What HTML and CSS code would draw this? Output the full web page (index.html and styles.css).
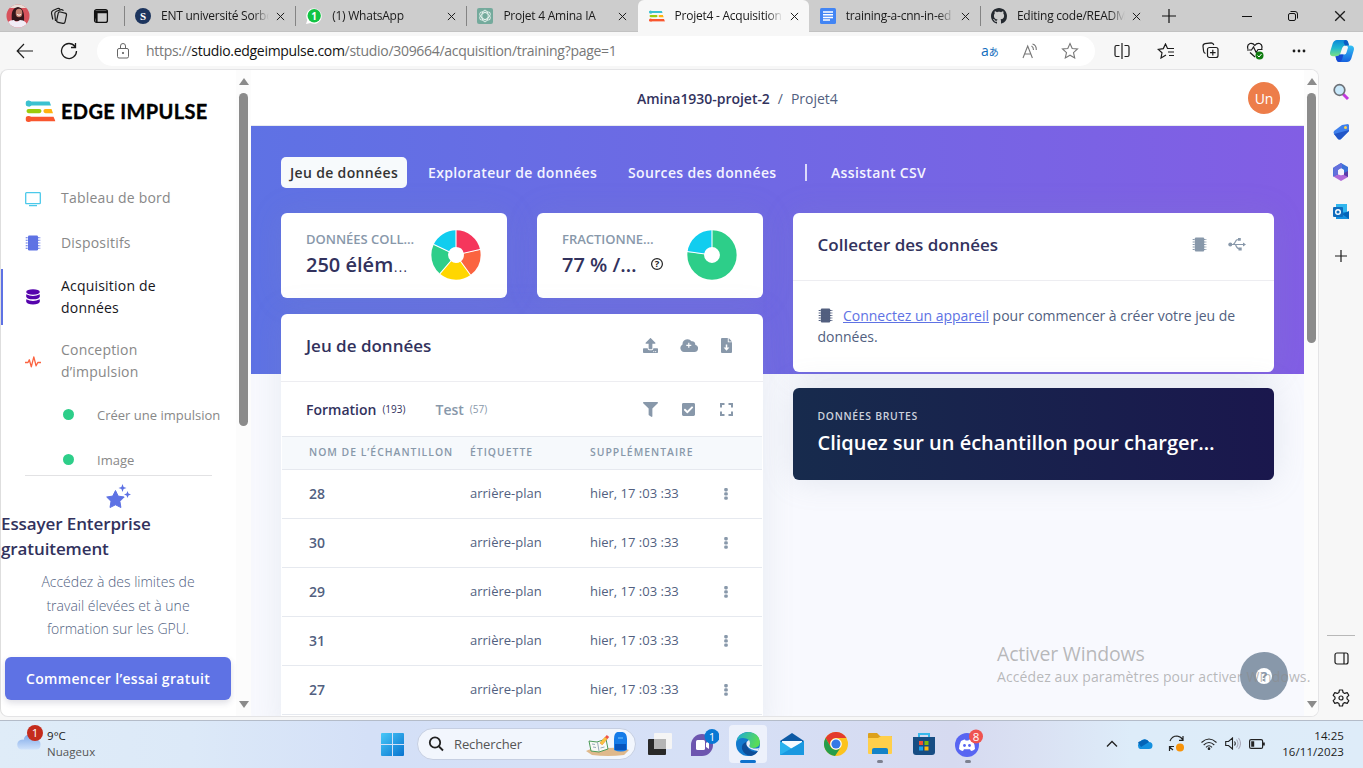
FILE: index.html
```html
<!DOCTYPE html>
<html lang="fr">
<head>
<meta charset="utf-8">
<title>Projet4 - Acquisition de données</title>
<link rel="stylesheet" href="styles.css">
</head>
<body>
<svg class="defs" width="0" height="0">
  <symbol id="close" viewBox="0 0 10 10"><path d="M1 1l8 8M9 1L1 9" stroke="#1b1b1b" stroke-width="1.1"/></symbol>
  <symbol id="edge-impulse" viewBox="0 0 30 22">
    <path d="M3 1.500h21l1.500 4H6Q4 7 2.500 6A3 3 0 0 1 3 .500Z" fill="#3bc1d0"/><circle cx="3" cy="3.500" r="3" fill="#3bc1d0"/>
    <rect x="1" y="9" width="15" height="4.200" rx="2.100" fill="#9ccb0b"/><path d="M20 9h6l1.500 4.200H20a2.100 2.100 0 0 1 0-4.200z" fill="#ffb30f"/>
    <path d="M3 16.800h25l2 4.400H3z" fill="#f9562e"/><circle cx="3" cy="18.900" r="3" fill="#f9562e"/>
  </symbol>
  <symbol id="chip" viewBox="0 0 16 16"><rect x="3" y=".500" width="10" height="15" rx="1.200" fill="currentColor"/><path d="M.700 2.700h14.600M.700 5.300h14.600M.700 8h14.600M.700 10.700h14.600M.700 13.300h14.600" stroke="currentColor" stroke-width="1.100" stroke-dasharray="1.700 .300"/></symbol>
  <symbol id="dots" viewBox="0 0 4 12"><rect x=".200" y="0" width="3.600" height="3.400" rx="1.300" fill="#8898aa"/><rect x=".200" y="4.200" width="3.600" height="3.400" rx="1.300" fill="#8898aa"/><rect x=".200" y="8.400" width="3.600" height="3.400" rx="1.300" fill="#8898aa"/></symbol>
</svg>

<div class="screen">
  <header class="tabbar">
    <div class="tab-tools">
      <svg width="24" height="24" viewBox="0 0 24 24"><defs><clipPath id="av"><circle cx="12" cy="12" r="11.500"/></clipPath></defs><g clip-path="url(#av)"><rect width="24" height="24" fill="#d8525c"/><rect y="0" width="24" height="4" fill="#e9ddd6"/><path d="M6 17Q4 4 12 3q7 1 6 14z" fill="#32151a"/><ellipse cx="13" cy="9" rx="3.300" ry="4.200" fill="#c48372"/><path d="M0 24q0-8 8-8 2 3 6 0 7 0 8 8z" fill="#f1edf7"/><path d="M11 10.500q2 1.500 4 0" stroke="#fff" fill="none"/></g></svg>
      <svg width="18" height="18" viewBox="0 0 18 18" fill="none" stroke="#1c1c1c" stroke-width="1.200"><rect x="7.500" y="5.500" width="8.500" height="10.500" rx="1.800" transform="rotate(12 12 10)"/><path d="M5.500 14L4.800 6.800Q4.700 4.800 6.500 4.200L11 2.700Q12.800 2.300 13.400 3.800M2.800 12.500L1.500 6.500Q1.200 4.400 3 3.500L7.500 1.500Q9 1 10 2.200"/></svg>
      <svg width="16" height="16" viewBox="0 0 16 16"><rect x="1.600" y="1.600" width="12.800" height="12.800" rx="2" fill="none" stroke="#111" stroke-width="1.300"/><path d="M1.500 2.500h13v2.700h-13zM1 5h3.600v9.500H3z" fill="#111"/></svg>
    </div>
    <div class="tab">
      <svg width="16" height="16" viewBox="0 0 16 16"><circle cx="8" cy="8" r="8" fill="#1d355e"/><text x="8" y="12" class="fav-serif">S</text></svg>
      <span class="tab-title">ENT université Sorbo</span><svg class="x"><use href="#close"/></svg>
    </div>
    <div class="tab">
      <svg width="16" height="16" viewBox="0 0 16 16"><path d="M0 16L1.300 12A7.700 7.700 0 1 1 4.500 15z" fill="#fff"/><circle cx="8.200" cy="7.800" r="6.700" fill="#12c343"/><text x="8" y="11.500" class="fav-num">1</text></svg>
      <span class="tab-title">(1) WhatsApp</span><svg class="x"><use href="#close"/></svg>
    </div>
    <div class="tab">
      <svg width="16" height="16" viewBox="0 0 16 16"><rect width="16" height="16" rx="2" fill="#74aa9c"/><g fill="none" stroke="#e8f3ef" stroke-width=".900"><ellipse cx="8" cy="8" rx="3.200" ry="5.800"/><ellipse cx="8" cy="8" rx="3.200" ry="5.800" transform="rotate(60 8 8)"/><ellipse cx="8" cy="8" rx="3.200" ry="5.800" transform="rotate(120 8 8)"/></g></svg>
      <span class="tab-title">Projet 4 Amina IA</span><svg class="x"><use href="#close"/></svg>
    </div>
    <div class="tab active">
      <svg width="16" height="16" viewBox="0 0 30 30"><g transform="translate(0 4)"><use href="#edge-impulse" width="30" height="22"/></g></svg>
      <span class="tab-title">Projet4 - Acquisition</span><svg class="x"><use href="#close"/></svg>
    </div>
    <div class="tab">
      <svg width="16" height="16" viewBox="0 0 16 16"><rect width="16" height="16" rx="1.500" fill="#4285f4"/><path d="M3 4h10M3 6.700h10M3 9.400h10M3 12.100h7" stroke="#fff" stroke-width="1.500"/></svg>
      <span class="tab-title">training-a-cnn-in-ed</span><svg class="x"><use href="#close"/></svg>
    </div>
    <div class="tab">
      <svg width="16" height="16" viewBox="0 0 16 16"><path fill="#24292f" d="M8 0C3.580 0 0 3.580 0 8c0 3.540 2.290 6.530 5.470 7.590.4.070.55-.17.55-.38 0-.19-.01-.82-.01-1.490-2.010.37-2.530-.49-2.690-.94-.09-.23-.48-.94-.82-1.130-.28-.15-.68-.52-.01-.53.63-.01 1.080.58 1.230.82.72 1.210 1.870.87 2.330.66.070-.52.280-.87.510-1.070-1.780-.2-3.640-.89-3.640-3.950 0-.87.310-1.590.820-2.150-.08-.2-.36-1.020.08-2.120 0 0 .67-.21 2.200.820.640-.18 1.320-.27 2-.27s1.360.09 2 .27c1.530-1.040 2.200-.82 2.200-.82.440 1.100.160 1.920.080 2.120.510.560.820 1.270.820 2.150 0 3.070-1.870 3.750-3.650 3.950.290.250.540.730.540 1.480 0 1.070-.01 1.930-.01 2.200 0 .21.150.46.550.38A8 8 0 0 0 16 8c0-4.420-3.580-8-8-8z"/></svg>
      <span class="tab-title">Editing code/README</span><svg class="x"><use href="#close"/></svg>
    </div>
    <div class="newtab"><svg width="14" height="14"><path d="M7 0v14M0 7h14" stroke="#111" stroke-width="1.200"/></svg></div>
    <div class="winctl">
      <svg width="10" height="10"><path d="M0 5.500h10" stroke="#111"/></svg>
      <svg width="10" height="10" viewBox="0 0 10 10" fill="none" stroke="#111"><rect x=".500" y="2.500" width="7" height="7" rx="1.500"/><path d="M2.500.500H7A2.500 2.500 0 0 1 9.500 3v4.500"/></svg>
      <svg width="12" height="12" viewBox="0 0 10 10"><use href="#close"/></svg>
    </div>
  </header>

  <div class="toolbar">
    <svg width="18" height="16" viewBox="0 0 18 16" fill="none" stroke="#1c1c1c" stroke-width="1.200"><path d="M17 8H1.500M8 1L1.200 8 8 15"/></svg>
    <svg class="reload" width="18" height="18" viewBox="0 0 18 18" fill="none" stroke="#1c1c1c" stroke-width="1.300"><path d="M15 4.500A7.500 7.500 0 1 0 16.500 9M15.500 1v4.500H11"/></svg>
    <div class="address">
      <svg width="14" height="16" viewBox="0 0 14 16" fill="none" stroke="#666"><rect x="1.500" y="5.500" width="11" height="9.500" rx="1.500"/><path d="M4.500 5V3a2.500 2.500 0 0 1 5 0v2"/><circle cx="7" cy="10" r=".700" fill="#666"/></svg>
      <span class="url">https://<b>studio.edgeimpulse.com</b>/studio/309664/acquisition/training?page=1</span>
      <span class="translate">a<small>あ</small></span>
      <svg width="17" height="16" viewBox="0 0 17 16" fill="none" stroke="#777" stroke-width="1.100"><path d="M1 15L5.700 3l4.700 12M2.600 11h6.200M9.500 3q2 1 2 4M10.500 1q4 1 3.800 6"/></svg>
      <svg class="fav" width="18" height="18" viewBox="0 0 18 18" fill="none" stroke="#777" stroke-width="1.100"><path d="M9 1.500l2.200 5 5.300.500-4 3.600 1.200 5.400L9 13.200 4.300 16l1.200-5.400-4-3.600 5.300-.500z"/></svg>
    </div>
    <div class="tools">
      <svg width="16" height="16" viewBox="0 0 16 16" fill="none" stroke="#1c1c1c" stroke-width="1.200"><path d="M5.500 2.500H2.500a1.500 1.500 0 0 0-1.500 1.500v8a1.500 1.500 0 0 0 1.500 1.500h3M10.500 2.500h3A1.500 1.500 0 0 1 15 4v8a1.500 1.500 0 0 1-1.500 1.500h-3M8 0v16"/></svg>
      <svg width="18" height="16" viewBox="0 0 18 16" fill="none" stroke="#1c1c1c" stroke-width="1.200"><path d="M9 12L4 15l1-5.200-3.700-3.400 5-.800L8.500 1l2 4.500H17M11 9h6M12 12.500h5"/></svg>
      <svg width="17" height="17" viewBox="0 0 17 17" fill="none" stroke="#1c1c1c" stroke-width="1.200"><rect x="5.500" y="5.500" width="10.500" height="10" rx="2"/><path d="M10.800 7.800v5.600M8 10.600h5.600M3.500 11.500Q1.800 11 1.600 9.300L1 4.200Q.900 2 3 1.600l6.300-.8q2 0 2.500 2.200"/></svg>
      <svg width="19" height="18" viewBox="0 0 19 18" fill="none" stroke="#1c1c1c" stroke-width="1.200"><path d="M2 7Q.500 3 4 1.500 7 .800 8.800 3.500 10.700.800 13.700 1.500 17 3 15.600 7M1 8h4.500l2-3 2.700 5.500L12 7.500h4.500M4 10.500l5 4.500"/><circle cx="13.500" cy="13.500" r="4" fill="#107c10" stroke="none"/><path d="M11.500 13.500l1.500 1.500 2.500-3" stroke="#fff" stroke-width="1"/></svg>
      <svg width="14" height="4"><g fill="#1c1c1c"><circle cx="2" cy="2" r="1.400"/><circle cx="7" cy="2" r="1.400"/><circle cx="12" cy="2" r="1.400"/></g></svg>
    </div>
    <svg class="copilot" width="24" height="22" viewBox="0 0 24 22"><defs><linearGradient id="cp1" x2="0" y2="1"><stop stop-color="#0b87d8"/><stop offset=".5" stop-color="#20b8d0"/><stop offset="1" stop-color="#7be082"/></linearGradient><linearGradient id="cp2" x2="0" y2="1"><stop stop-color="#34c3f4"/><stop offset="1" stop-color="#1562df"/></linearGradient></defs><path d="M7 0h8.500q2 0 2.500 2l1 3.500h-3.500q-2.500 0-3.500 3l-2 6q-.7 1.700-3 1.700H3q-4 0-2.700-5L2.700 3.500Q4 0 7 0z" fill="url(#cp1)"/><path d="M17 5.500h3.500q4.500.5 3.200 5L21.300 18.500Q20 22 17 22H9q-2 0-2.700-2.500L5.500 16.200h2q2.300 0 3-1.700h4q1.500 0 2-2l1.500-5z" fill="url(#cp2)"/><path d="M9.500 14.500Q8.800 16.200 6.500 16.200h-1l.8 3Q7 22 9 22q2.300 0 3-2.500l1.500-5z" fill="#174ad2"/><path d="M15 0q2.500 0 3 2l1 3.500h-4L13.500 2z" fill="#0a5cc4"/></svg>
  </div>

  <div class="workspace">
    <div class="page">
      <aside class="side">
        <div class="logo"><svg width="31" height="22" viewBox="0 0 30 22"><use href="#edge-impulse"/></svg><span>EDGE IMPULSE</span></div>
        <nav class="menu">
          <a><svg class="low" width="16" height="15" viewBox="0 0 16 15"><rect x=".700" y=".700" width="14.600" height="11" rx=".800" fill="none" stroke="#4bc9ea" stroke-width="1.300"/><path d="M4 13.700h8" stroke="#4bc9ea" stroke-width="1.200"/></svg><span>Tableau de bord</span></a>
          <a><svg class="indigo" width="16" height="16"><use href="#chip"/></svg><span>Dispositifs</span></a>
          <a class="tall current"><svg width="16" height="16" viewBox="0 0 16 16"><g fill="#5603ad"><ellipse cx="8" cy="3" rx="6.800" ry="2.700"/><path d="M1.200 5.200q6.800 3.500 13.600 0v2.500q-1 2.600-6.800 2.600t-6.800-2.600zM1.200 10.300q6.800 3.500 13.600 0v2.500q-1 2.600-6.800 2.600t-6.800-2.600z"/></g></svg><span>Acquisition de données</span></a>
          <a class="tall design"><svg class="low" width="16" height="12" viewBox="0 0 16 12"><path d="M0 6.500h3l1.300-2.700 2 7L8.800.800l2.300 9 1.700-3.300H16" fill="none" stroke="#fb6340" stroke-width="1.300" stroke-linejoin="round"/></svg><span>Conception d’impulsion</span></a>
          <a class="sub"><i></i><span>Créer une impulsion</span></a>
          <a class="sub last"><i></i><span>Image</span></a>
        </nav>
        <div class="promo">
          <svg width="26" height="25" viewBox="0 0 26 25" fill="#5e72e4"><path d="M10.500 6.500l2.700 5.600 6 .900-4.300 4.300 1 6.200-5.400-2.700L5 23.500l1-6.200L1.700 13l6-.900z" stroke="#5e72e4" stroke-linejoin="round"/><path d="M17.500 0l1.100 2.900 2.900 1.100-2.900 1.100-1.100 2.900-1.100-2.900L13.500 4l2.900-1.100zM22.500 7l1 2.500 2.500 1-2.500 1-1 2.500-1-2.500-2.500-1 2.500-1z"/></svg>
          <h3>Essayer Enterprise gratuitement</h3>
          <p>Accédez à des limites de travail élevées et à une formation sur les GPU.</p>
          <button>Commencer l’essai gratuit</button>
        </div>
      </aside>
      <div class="scroll"><i class="up"></i><i class="thumb side-thumb"></i><i class="down"></i></div>

      <main class="main">
        <div class="crumbs"><b>Amina1930-projet-2</b><span>/</span><span>Projet4</span><div class="user">Un</div></div>
        <div class="content">
          <nav class="tabs"><a class="on">Jeu de données</a><a>Explorateur de données</a><a>Sources des données</a><i></i><a>Assistant CSV</a></nav>
          <div class="cols">
            <div class="col">
              <div class="stats">
                <section class="card stat">
                  <div><h6>DONNÉES COLL…</h6><strong>250 élém<em>…</em></strong></div>
                  <svg class="pie" width="50" height="50" viewBox="0 0 50 50"><g transform="rotate(-90 25 25)" fill="none" stroke-width="16.700"><circle cx="25" cy="25" r="16.300" pathLength="100" stroke="#f5365c" stroke-dasharray="21.500 100"/><circle cx="25" cy="25" r="16.300" pathLength="100" stroke="#fb6340" stroke-dasharray="18.500 100" stroke-dashoffset="-21.500"/><circle cx="25" cy="25" r="16.300" pathLength="100" stroke="#ffd600" stroke-dasharray="21.300 100" stroke-dashoffset="-40"/><circle cx="25" cy="25" r="16.300" pathLength="100" stroke="#2dce89" stroke-dasharray="20.700 100" stroke-dashoffset="-61.300"/><circle cx="25" cy="25" r="16.300" pathLength="100" stroke="#11cdef" stroke-dasharray="18 100" stroke-dashoffset="-82"/></g><path d="M25 25V0M25 25L50 19.200M25 25L39.700 45.300M25 25L8.800 43.800M25 25L2.300 14.200" stroke="#fff" stroke-width="1.100"/></svg>
                </section>
                <section class="card stat">
                  <div><h6>FRACTIONNE…</h6><strong>77 % /…<svg class="help" width="12" height="12" viewBox="0 0 12 12"><circle cx="6" cy="6" r="5.400" fill="none" stroke="#222" stroke-width="1.200"/><text x="6" y="9.300">?</text></svg></strong></div>
                  <svg class="pie" width="50" height="50" viewBox="0 0 50 50"><g transform="rotate(-90 25 25)" fill="none" stroke-width="16.700"><circle cx="25" cy="25" r="16.300" pathLength="100" stroke="#2dce89" stroke-dasharray="77 100"/><circle cx="25" cy="25" r="16.300" pathLength="100" stroke="#11cdef" stroke-dasharray="23 100" stroke-dashoffset="-77"/></g><path d="M25 25V0M25 25L0 21.500" stroke="#fff" stroke-width="1.100"/></svg>
                </section>
              </div>
              <section class="card dataset">
                <div class="head"><h2>Jeu de données</h2>
                  <div class="acts">
                    <svg width="15" height="15" viewBox="0 0 512 512"><path fill="#8898aa" d="M296 384h-80c-13.300 0-24-10.700-24-24V192h-87.700c-17.800 0-26.700-21.500-14.100-34.100L242.300 5.700c7.500-7.500 19.800-7.500 27.300 0l152.200 152.200c12.600 12.600 3.700 34.100-14.100 34.100H320v168c0 13.300-10.700 24-24 24zm216-8v112c0 13.300-10.700 24-24 24H24c-13.300 0-24-10.700-24-24V376c0-13.300 10.700-24 24-24h136v8c0 30.900 25.100 56 56 56h80c30.900 0 56-25.100 56-56v-8h136c13.300 0 24 10.700 24 24zm-124 88c0-11-9-20-20-20s-20 9-20 20 9 20 20 20 20-9 20-20zm64 0c0-11-9-20-20-20s-20 9-20 20 9 20 20 20 20-9 20-20z"/></svg>
                    <svg width="18" height="13" viewBox="0 0 18 13"><path fill="#8898aa" d="M4 13a4 4 0 0 1-1.500-7.500A5 5 0 0 1 11.500 2.300 3 3 0 0 1 15.200 5.700 3.700 3.700 0 0 1 14.500 13z"/><path d="M8.800 3.800v5M6.300 6.300h5" stroke="#fff" stroke-width="1.200"/></svg>
                    <svg width="11" height="15" viewBox="0 0 11 15"><path fill="#8898aa" d="M1 0h5.800v4.300H11V14a1 1 0 0 1-1 1H1a1 1 0 0 1-1-1V1a1 1 0 0 1 1-1zM7.700 0L11 3.400H7.700z"/><path d="M5.500 6.500v4" stroke="#fff" stroke-width="1.500"/><path d="M2.600 9.500h5.800l-2.900 3.200z" fill="#fff"/></svg>
                  </div>
                </div>
                <div class="sets"><b>Formation</b><small>(193)</small><b class="dim">Test</b><small class="dim">(57)</small>
                  <div class="acts">
                    <svg width="15" height="15" viewBox="0 0 512 512"><path fill="#8898aa" d="M487.976 0H24.028C2.710 0-8.047 25.866 7.058 40.971L192 225.941V432c0 7.831 3.821 15.170 10.237 19.662l80 55.980C298.020 518.690 320 507.493 320 487.980V225.941l184.947-184.970C520.021 25.896 509.338 0 487.976 0z"/></svg>
                    <svg width="13" height="15" viewBox="0 0 448 512"><path fill="#8898aa" d="M400 480H48c-26.510 0-48-21.490-48-48V80c0-26.510 21.490-48 48-48h352c26.510 0 48 21.490 48 48v352c0 26.510-21.490 48-48 48zm-204.686-98.059l184-184c6.248-6.248 6.248-16.379 0-22.627l-22.627-22.627c-6.248-6.248-16.379-6.249-22.628 0L184 302.745l-70.059-70.059c-6.248-6.248-16.379-6.248-22.628 0l-22.627 22.627c-6.248 6.248-6.248 16.379 0 22.627l104 104c6.249 6.250 16.379 6.250 22.628.001z"/></svg>
                    <svg width="13" height="13" viewBox="0 0 13 13"><path d="M1 4.500V1h3.500M8.500 1H12v3.500M12 8.500V12H8.500M4.500 12H1V8.500" fill="none" stroke="#8898aa" stroke-width="2"/></svg>
                  </div>
                </div>
                <div class="row th"><span>NOM DE L’ÉCHANTILLON</span><span>ÉTIQUETTE</span><span>SUPPLÉMENTAIRE</span></div>
                <div class="row"><b>28</b><span>arrière-plan</span><span>hier, 17 :03 :33</span><svg><use href="#dots"/></svg></div>
                <div class="row"><b>30</b><span>arrière-plan</span><span>hier, 17 :03 :33</span><svg><use href="#dots"/></svg></div>
                <div class="row"><b>29</b><span>arrière-plan</span><span>hier, 17 :03 :33</span><svg><use href="#dots"/></svg></div>
                <div class="row"><b>31</b><span>arrière-plan</span><span>hier, 17 :03 :33</span><svg><use href="#dots"/></svg></div>
                <div class="row"><b>27</b><span>arrière-plan</span><span>hier, 17 :03 :33</span><svg><use href="#dots"/></svg></div>
              </section>
            </div>
            <div class="col">
              <section class="card collect">
                <div class="head"><h2>Collecter des données</h2>
                  <svg class="grey" width="15" height="15"><use href="#chip"/></svg>
                  <svg width="18" height="13" viewBox="0 0 18 13" fill="#8898aa"><circle cx="2.300" cy="6.500" r="2"/><path d="M15 4.400l3 2.100-3 2.100zM10 0h2.800v2.800H10zM10.500 9.500h3.200v3H10.500z"/><path d="M3 6.500h13M5 6.500Q6.500 6 7.500 3.500 8 1.500 10.500 1.500M7.500 6.500Q9 11 12 11" fill="none" stroke="#8898aa" stroke-width="1.200"/></svg>
                </div>
                <p><svg class="slate" width="15" height="15"><use href="#chip"/></svg><a>Connectez un appareil</a> pour commencer à créer votre jeu de données.</p>
              </section>
              <section class="raw"><h6>DONNÉES BRUTES</h6><h2>Cliquez sur un échantillon pour charger…</h2></section>
            </div>
          </div>
        </div>
        <div class="chat"><svg width="16" height="16" viewBox="0 0 16 16"><circle cx="8" cy="8" r="8" fill="#fff"/><text x="8" y="12.500">?</text></svg></div>
      </main>
      <div class="scroll"><i class="up"></i><i class="thumb main-thumb"></i><i class="down"></i></div>
    </div>

    <aside class="edgebar">
      <svg width="18" height="18" viewBox="0 0 18 18"><path d="M11 11l5 5" stroke="#c239e0" stroke-width="3"/><circle cx="7.500" cy="7" r="5.300" fill="#c9e9fb" stroke="#6d7177" stroke-width="1.700"/></svg>
      <svg width="18" height="18" viewBox="0 0 18 18"><path d="M10 2l6-1 1 1v6l-8 8q-1.500 1-3 0L2 11q-1-1.500 0-3z" fill="#3f80ec"/><path d="M2 11l15-4v1l-8 8q-1.500 1-3 0z" fill="#2256c7"/><circle cx="13.500" cy="4.500" r="1.500" fill="#ffd34e"/></svg>
      <svg width="18" height="18" viewBox="0 0 18 18"><path d="M9 0l7 4v5l-4 2V7L9 5 6 7v5l-4 2-1-1V5z" fill="#3c72d8"/><path d="M9 0L1.500 4.500v9L6 11V7l4-2V1z" fill="#6470dc"/><path d="M1.500 13.500L9 18l7-4V9l-5 3-5-.500z" fill="#b06ad8"/><path d="M16 14V8l-4 2v2z" fill="#5b3ca8"/><path d="M9 5.500l3 1.700v3.600l-3 1.700-3-1.700V7.200z" fill="#f4f4fa"/></svg>
      <svg width="18" height="18" viewBox="0 0 18 18"><path d="M4 1h11v15H4z" fill="#31b6ee"/><path d="M4 9h13v7H4z" fill="#1490df"/><path d="M10 11l7-3v8z" fill="#0364b8"/><rect x="1" y="4" width="10" height="10" rx="1" fill="#0f6cbd"/><circle cx="6" cy="9" r="2.300" fill="none" stroke="#fff" stroke-width="1.400"/></svg>
      <svg class="plus" width="12" height="12"><path d="M6 0v12M0 6h12" stroke="#1c1c1c" stroke-width="1.200"/></svg>
      <hr>
      <svg class="pane" width="15" height="13" viewBox="0 0 15 13" fill="none" stroke="#1c1c1c" stroke-width="1.200"><rect x="1" y="1" width="13" height="11" rx="2"/><path d="M10 1v11"/></svg>
      <svg class="gear" width="18" height="18" viewBox="0 0 18 18" fill="none" stroke="#1c1c1c" stroke-width="1.200"><circle cx="9" cy="9" r="2"/><path d="M7.500 1h3l.6 2.500 1.600.9 2.500-.8 1.600 2.700L15 8.200v1.600l1.800 1.900-1.600 2.700-2.500-.8-1.600.9-.6 2.500h-3l-.6-2.500-1.600-.9-2.500.8-1.600-2.700L3 9.800V8.200L1.200 6.300l1.600-2.700 2.500.8 1.600-.9z" stroke-linejoin="round"/></svg>
    </aside>
  </div>

  <footer class="taskbar">
    <div class="weather">
      <svg width="30" height="30" viewBox="0 0 30 30"><defs><linearGradient id="cl" x2="0" y2="1"><stop stop-color="#7ca7e8"/><stop offset="1" stop-color="#cfe2fb"/></linearGradient></defs><path d="M6 25.500a5 5 0 0 1-.5-9.500q2-1 3 0 1-5 6-6 6-.5 7 6 4 0 4 4.500 0 5-4 5z" fill="url(#cl)"/><circle cx="20" cy="9" r="8" fill="#c42b1c"/><text x="20" y="13">1</text></svg>
      <div><b>9°C</b><span>Nuageux</span></div>
    </div>
    <div class="apps">
      <svg class="start" width="23" height="23" viewBox="0 0 23 23"><defs><linearGradient id="w" x2="1" y2="1"><stop stop-color="#48c8f8"/><stop offset="1" stop-color="#0873cf"/></linearGradient></defs><path d="M0 1q0-1 1-1h10v11H0zM12 0h10q1 0 1 1v10H12zM0 12h11v11H1q-1 0-1-1zM12 12h11v10q0 1-1 1H12z" fill="url(#w)"/></svg>
      <div class="search">
        <svg width="16" height="16" viewBox="0 0 16 16" fill="none" stroke="#222" stroke-width="1.800"><circle cx="7" cy="6.500" r="5.200"/><path d="M11 10.500l4 4"/></svg><span>Rechercher</span>
        <svg class="art" width="46" height="26" viewBox="0 0 46 26"><path d="M1 20q8-4 22-3 15-1 21 2l-5 5q-16 2-32 0z" fill="#dfb98c"/><path d="M4 10l8 1 9-3 2 10-9 3-8-1z" fill="#f8faf5" stroke="#4d9b58"/><path d="M12.500 11l1.500 9M7 13l3 .500M8 16l3 .500M15.500 17l4-1" stroke="#9ab"/><path d="M16 13l7-8" stroke="#ef5547" stroke-width="3.200"/><path d="M16 13l5-6" stroke="#f7c342" stroke-width="3.200"/><path d="M29 19V8q0-6 3.500-7h5Q42 2 42 8v11q-6 3-13 0z" fill="#157be8"/><path d="M30 13h11v6H30z" fill="#0755bd"/><path d="M33 7h5" stroke="#78c9ff"/></svg>
      </div>
      <div class="app"><svg width="24" height="24" viewBox="0 0 24 24"><rect x="0" y="7" width="18" height="16" rx="1" fill="#292929"/><rect x="6" y="1" width="18" height="16" rx="1" fill="#f5f5f5"/><rect x="6" y="7" width="12" height="10" fill="#b5b5b5"/></svg></div>
      <div class="app"><svg width="30" height="30" viewBox="0 0 30 30"><path d="M2 27V16a11 11 0 1 1 11 11z" fill="#6d56af"/><rect x="7" y="11" width="9" height="10" rx="1.500" fill="#fff"/><path d="M17 14l3-2v8l-3-2z" fill="#fff"/><circle cx="23" cy="7.500" r="7.500" fill="#0878d4"/><text x="23" y="12">1</text></svg></div>
      <div class="app focus"><svg width="24" height="24" viewBox="0 0 24 24"><defs><linearGradient id="ed" x2="1" y2=".3"><stop stop-color="#19a8dc"/><stop offset="1" stop-color="#59dc57"/></linearGradient></defs><circle cx="12" cy="12" r="12" fill="#1279ce"/><path d="M0 11Q2 0 13 0q10 1 11 10 0 6-8 6-4-1-2-4 0-6-7-6-5 0-7 5z" fill="url(#ed)"/><path d="M10 10q-5 2-4 7 2 6 9 7 5-1 7-5-4 2-8-1-4-3-2-7z" fill="#0d4d98"/><path d="M13 8q-4 2-2 6 3 4 11 5l1-3q-4 1-7 0-4-1-2-4 0-3-1-4z" fill="#e9eef8"/></svg></div>
      <div class="app"><svg width="24" height="24" viewBox="0 0 24 24"><path d="M0 9l12-8 12 8v6H0z" fill="#0d5aa5"/><path d="M2 9h20v8H2z" fill="#f5faff"/><path d="M0 9l12 8 12-8v14H0z" fill="#2bb2ee"/><path d="M0 23L24 9v14z" fill="#1998e0"/></svg></div>
      <div class="app"><svg width="24" height="24" viewBox="0 0 24 24"><circle cx="12" cy="12" r="12" fill="#fcc31e"/><path d="M1.600 6A12 12 0 0 1 22.400 6H12a6 6 0 0 0-5.200 9z" fill="#e33b2e"/><path d="M1.600 6A12 12 0 0 0 11 24l6-9a6 6 0 0 1-10.200 0z" fill="#269d4b"/><circle cx="12" cy="12" r="5.800" fill="#fff"/><circle cx="12" cy="12" r="4.600" fill="#3478e5"/></svg></div>
      <div class="app open"><svg width="24" height="24" viewBox="0 0 24 24"><path d="M0 2q0-1 1-1h8l3 3h11q1 0 1 1v8H0z" fill="#dda11c"/><path d="M0 6h10l3-2h10q1 0 1 1v16q0 1-1 1H1q-1 0-1-1z" fill="#ffcf4b"/><path d="M4 22v-4q0-2 2-2h12q2 0 2 2v4z" fill="#1382c8"/></svg></div>
      <div class="app"><svg width="24" height="24" viewBox="0 0 24 24"><path d="M7 6V2h10v4" fill="none" stroke="#38b8ec" stroke-width="2"/><path d="M1 5h22v15q0 3-3 3H4q-3 0-3-3z" fill="#174d83"/><path d="M7 9h4v4H7z" fill="#f05133"/><path d="M12.500 9h4v4h-4z" fill="#80bc06"/><path d="M7 14.500h4v4H7z" fill="#18a4ee"/><path d="M12.500 14.500h4v4h-4z" fill="#ffba08"/></svg></div>
      <div class="app open"><svg width="30" height="30" viewBox="0 0 30 30"><circle cx="14" cy="16" r="12" fill="#5865f2"/><path d="M8 12q3-2 4-1.500l.6 1h2.800l.6-1q2 0 4 1.500 2 4 2 8-2 2-4 2l-1-1.700H11L10 22q-2 0-4-2 0-4 2-8z" fill="#fff"/><circle cx="11.500" cy="16.500" r="1.400" fill="#5865f2"/><circle cx="16.500" cy="16.500" r="1.400" fill="#5865f2"/><circle cx="23" cy="7.500" r="7" fill="#ef5350"/><text x="23" y="12">8</text></svg></div>
    </div>
    <div class="tray">
      <svg width="12" height="8" viewBox="0 0 12 8" fill="none" stroke="#222" stroke-width="1.300"><path d="M1 6.500l5-5 5 5"/></svg>
      <svg class="cloud" width="17" height="11" viewBox="0 0 17 11"><path d="M4 11a4 4 0 0 1 0-7 5 5 0 0 1 9 0 3.500 3.500 0 0 1 0 7z" fill="#1490df"/><path d="M2 4.500A4 4 0 0 1 5 3a5 5 0 0 1 8 1l-8 5z" fill="#0364b8"/></svg>
      <svg class="sync" width="17" height="17" viewBox="0 0 17 17" fill="none" stroke="#222" stroke-width="1.200"><path d="M2 6q2-5 7-5 4 .500 6 4M15 1v4.300h-4M1.500 16v-4.500H6M1.500 12l3.500 3"/><circle cx="12" cy="12.500" r="4" fill="#f7930a" stroke="none"/></svg>
      <svg class="wifi" width="16" height="12" viewBox="0 0 16 12" fill="none" stroke="#222" stroke-width="1.100"><path d="M.500 4.500q7.500-7 15 0M2.700 7q5.300-5 10.600 0M5 9.300q3-3 6 0"/><circle cx="8" cy="10.700" r=".800" fill="#222"/></svg>
      <svg class="vol" width="16" height="13" viewBox="0 0 16 13" fill="none" stroke="#222" stroke-width="1.100"><path d="M.700 4.500h2.800L7.500 1v11L3.500 8.500H.700zM9.500 4.500q1.500 2 0 4"/><path d="M11.500 2.500q3 4 0 8M13.500 1q4 5.500 0 11" stroke="#aab"/></svg>
      <svg class="bat" width="16" height="10" viewBox="0 0 16 10"><rect x=".600" y=".600" width="13" height="8.800" rx="1.500" fill="none" stroke="#222" stroke-width="1.200"/><path d="M2.200 2.200h3v5.600h-3zM14 3.500h1.800v3H14z" fill="#222"/></svg>
      <div class="clock"><span>14:25</span><span>16/11/2023</span></div>
    </div>
  </footer>
  <div class="watermark"><div class="wm1">Activer Windows</div><div class="wm2">Accédez aux paramètres pour activer Windows.</div></div>
</div>
</body>
</html>
```
FILE: styles.css
```css
* { box-sizing: border-box; }
body { margin: 0; font-family: "Open Sans", "Noto Sans", sans-serif; overflow: hidden; }
h2, h3, h6, p { margin: 0; }
svg { flex: none; display: block; }
.defs { position: absolute; }
.screen { position: relative; width: 1363px; height: 768px; display: flex; flex-direction: column; background: #f7f7f7; overflow: hidden; }

/* Browser tabs */
.tabbar { height: 32px; display: flex; background: #cdcdcd; flex: none; box-shadow: inset 0 -1px #c2c2c2; }
.tab-tools { width: 124px; display: flex; align-items: center; padding-left: 6px; }
.tab-tools svg:nth-child(2) { margin-left: 20px; }
.tab-tools svg:nth-child(3) { margin-left: 25px; }
.tab { position: relative; width: 171.2px; display: flex; align-items: center; padding-left: 11px; }
.tab::before { content: ""; position: absolute; left: 0; top: 6px; width: 1px; height: 20px; background: #848484; }
.tab.active::before, .tab.active + .tab::before { display: none; }
.tab.active { background: #f7f7f7; border-radius: 6px 6px 0 0; }
.tab-title { margin-left: 10px; width: 108px; font-size: 12px; letter-spacing: -.24px; line-height: 20px; white-space: nowrap; overflow: hidden; color: #1a1a1a; -webkit-mask-image: linear-gradient(90deg, #000 85%, transparent); mask-image: linear-gradient(90deg, #000 85%, transparent); }
.x { width: 9px; height: 9px; margin-left: 7px; }
.fav-serif { font: bold 11px "Liberation Serif", serif; fill: #fff; text-anchor: middle; }
.fav-num { font: bold 10px "Open Sans", sans-serif; fill: #fff; text-anchor: middle; }
.newtab { display: flex; align-items: center; padding-left: 11px; }
.winctl { display: flex; align-items: center; gap: 36px; margin-left: auto; padding-right: 17px; }

/* Browser toolbar */
.toolbar { height: 37px; flex: none; display: flex; align-items: center; padding-left: 16px; }
.reload { margin-left: 26px; }
.address { width: 998px; height: 30px; margin-left: 19px; border-radius: 15px; background: #fff; display: flex; align-items: center; padding-left: 19px; }
.url { margin-left: 16px; font-size: 14px; letter-spacing: -.3px; color: #777; width: 835px; white-space: nowrap; }
.url b { font-weight: 400; color: #111; }
.translate { width: 17px; font-size: 14px; line-height: 16px; color: #0f6cbd; display: flex; align-items: baseline; }
.translate small { font: 10px "Noto Sans CJK JP", sans-serif; }
.address .translate + svg { margin-left: 24px; }
.fav { margin-left: 22px; }
.tools { display: flex; align-items: center; margin-left: 19px; gap: 27px; }
.copilot { margin-left: 24px; }

/* Page frame */
.workspace { height: 648px; display: flex; flex: none; }
.page { width: 1319px; height: 648px; display: flex; background: #fff; border: 1px solid #e4e4e6; border-left-color: #dedede; border-radius: 8px; overflow: hidden; flex: none; }
.scroll { width: 15px; flex: none; background: #fcfcfc; display: flex; flex-direction: column; align-items: center; padding: 8px 0 8px; }
.up { border: 5px solid transparent; border-top: 0; border-bottom: 7px solid #8b8b8b; }
.down { border: 5px solid transparent; border-bottom: 0; border-top: 7px solid #8b8b8b; margin-top: auto; }
.thumb { width: 9px; margin-top: 8px; border-radius: 5px; background: #8b8b8b; }
.side-thumb { height: 333px; }
.main-thumb { height: 250px; }

/* Studio navigation */
.side { width: 235px; flex: none; display: flex; flex-direction: column; }
.logo { height: 105px; padding: 30px 0 0 24px; display: flex; align-items: flex-start; }
.logo span { font: 700 20px/22px Lato, sans-serif; letter-spacing: .35px; margin-left: 5px; color: #000; white-space: nowrap; -webkit-text-stroke: .35px #000; }
.menu { height: 293px; overflow: hidden; font-size: 14px; line-height: 22px; letter-spacing: .2px; color: #888; }
.menu a { display: flex; align-items: center; height: 45px; padding-left: 24px; }
.menu a span { margin-left: 20px; width: 120px; }
.menu a.tall { height: 64px; }
.menu a.design { height: 63px; }
.low { margin-top: 3px; }
.menu .current { color: #16161c; position: relative; }
.menu .current::before { content: ""; position: absolute; left: 0; top: 4px; width: 2px; height: 56px; background: #5e72e4; }
.menu a.sub { padding-left: 62px; font-size: 13px; letter-spacing: 0; white-space: nowrap; }
.menu .sub i { width: 11px; height: 11px; border-radius: 50%; background: #2dce89; }
.menu .sub span { margin-left: 23px; }
.indigo { color: #5e72e4; }
.grey { color: #8898aa; }
.slate { color: #525f7f; }
.promo { display: flex; flex-direction: column; margin-top: 7px; position: relative; }
.promo::before { content: ""; height: 1px; background: #e2e2e4; margin: 0 24px 0 24px; }
.promo > svg { margin: 8px 0 0 104px; }
.promo h3 { font-size: 17px; line-height: 25px; font-weight: 600; color: #32325d; letter-spacing: -.1px; width: 180px; margin-top: 2px; }
.promo p { font-size: 14px; line-height: 23.6px; font-weight: 300; color: #525f7f; text-align: center; width: 170px; margin: 9px 0 0 32px; }
.promo button { width: 226px; height: 43px; margin: 16px 0 0 4px; border: 0; border-radius: 6px; background: #5e72e4; color: #fff; font: 600 14px "Open Sans", sans-serif; letter-spacing: .34px; box-shadow: 0 3px 6px rgba(50, 50, 93, .16); white-space: nowrap; }

/* Studio content */
.main { width: 1053px; flex: none; position: relative; background: #f8f9fe; overflow: hidden; }
.crumbs { height: 56px; background: #fff; border-bottom: 1px solid #e9ecef; position: relative; display: flex; align-items: center; padding: 1px 0 0 386px; gap: 8px; font-size: 14px; letter-spacing: -.03px; color: #525f7f; white-space: nowrap; }
.crumbs b { font-weight: 600; color: #32325d; }
.user { margin-left: auto; margin-right: 24px; width: 32px; height: 32px; border-radius: 50%; background: #ed7d49; color: #fff; display: flex; align-items: center; justify-content: center; font-size: 14px; }
.content { padding: 31px 30px 0; background: linear-gradient(87deg, #5e72e4, #825ee4) 0 0 / 100% 248px no-repeat; height: 592px; }
.tabs { display: flex; height: 31px; font-size: 14px; font-weight: 600; letter-spacing: .35px; color: #f4f4ff; white-space: nowrap; line-height: 31px; }
.tabs a.on { background: #f7fafc; border-radius: 5px; width: 126px; text-align: center; color: #333; }
.tabs a:nth-child(2) { margin-left: 21px; width: 200px; }
.tabs a:nth-child(3) { width: 177px; }
.tabs i { width: 2px; height: 17px; background: #dcdafa; margin: 7px 24px 0 0; }
.cols { display: grid; grid-template-columns: 482px 481px; gap: 30px; margin-top: 25px; align-items: start; }
.col { display: flex; flex-direction: column; gap: 16px; }
.stats { display: grid; grid-template-columns: 226px 226px; gap: 30px; }
.card { background: #fff; border-radius: 6px; box-shadow: 0 0 32px rgba(136, 152, 170, .15); }
.stat { height: 85px; display: flex; justify-content: space-between; padding: 17px 25.6px 0 25px; }
.stat h6 { font-size: 13px; line-height: 18px; font-weight: 600; color: #8898aa; white-space: nowrap; letter-spacing: -.02px; }
.stat strong { display: flex; align-items: center; font-size: 20px; line-height: 28px; font-weight: 600; color: #32325d; margin-top: 3px; white-space: nowrap; }
.stat em { font-style: normal; font-weight: 300; }
.help { margin: -2px 0 0 14px; }
.help text, .chat text { font: bold 9.5px "Open Sans", sans-serif; text-anchor: middle; fill: #222; }
.head { display: flex; align-items: center; height: 68px; border-bottom: 1px solid #ededf1; padding: 0 25px 4px; }
.head h2 { font-size: 17px; font-weight: 600; color: #32325d; white-space: nowrap; }
.acts { margin-left: auto; display: grid; grid-template-columns: 38px 38px 38px; justify-items: center; align-items: center; margin-right: -7.5px; }
.dataset { height: 420px; border-radius: 6px 6px 0 0; }
.sets { height: 54px; display: flex; align-items: center; padding: 0 25px; font-size: 14px; color: #32325d; }
.sets b { font-weight: 600; }
.sets small { font-size: 10px; margin-left: 6px; }
.sets .dim { color: #8898aa; }
.sets b.dim { margin-left: 30px; }
.sets small.dim { margin-left: 6px; }
.row { display: grid; grid-template-columns: 161px 120px 133px 1fr; align-items: center; height: 49px; padding: 0 0 2px 27px; border-bottom: 1px solid #e6e9ef; font-size: 13px; color: #525f7f; margin: 0 1px; white-space: nowrap; }
.row b { font-weight: 600; font-size: 14px; }
.row svg { width: 4px; height: 12px; margin: 1px 0 0 1px; }
.row.th { height: 34px; background: #f6f9fc; border-top: 1px solid #e6e9ef; font-size: 10.400px; font-weight: 600; letter-spacing: 1px; color: #8898aa; }
.collect { height: 159px; }
.collect .head { padding-left: 24.5px; }
.collect .head h2 { margin-right: auto; }
.collect .head svg + svg { margin-left: 21px; }
.collect .head svg:last-child { margin-right: 2.6px; }
.collect p { padding: 24px 20px 0 24.500px; font-size: 14px; line-height: 21px; color: #525f7f; letter-spacing: -.01px; }
.collect p svg { display: inline-block; vertical-align: -2px; margin-right: 10.500px; }
.collect p a { color: #5e72e4; text-decoration: underline; }
.raw { height: 92px; border-radius: 6px; background: linear-gradient(87deg, #172b4d, #1a174d); padding: 20px 24.5px; color: #fff; white-space: nowrap; box-shadow: 0 0 32px rgba(136, 152, 170, .2); }
.raw h6 { font-size: 10.400px; line-height: 16px; font-weight: 600; letter-spacing: .7px; color: #cdd2dd; }
.raw h2 { font-size: 20px; line-height: 30px; margin-top: 4px; font-weight: 600; }
.chat { position: absolute; left: 989px; top: 582px; width: 48px; height: 48px; border-radius: 50%; background: #8898aa; display: grid; place-items: center; }
.chat text { font-size: 13px; fill: #8898aa; }

/* Edge side rail */
.edgebar { width: 44px; display: flex; flex-direction: column; align-items: center; padding-top: 14px; gap: 22px; }
.plus { margin-top: 7px; }
.edgebar hr { width: 28px; border: 0; border-top: 1px solid #b8b8b8; margin: auto 0 -6px; }
.gear { margin: 2px 0 10px; }

/* Windows taskbar */
.taskbar { position: absolute; left: 0; right: 0; bottom: 0; height: 48px; border-top: 1px solid #b4bcc9; background: linear-gradient(90deg, #dfecf8 0, #dce9f8 14%, #d4e0f7 27%, #d6e0f6 52%, #d6daf0 70%, #dae1f3 76%, #ddecf9 83%, #deecf9 100%); display: flex; }
.weather { display: flex; width: 380px; padding: 3px 0 0 15px; font-size: 12px; color: #555; }
.weather div { display: flex; flex-direction: column; margin-left: 2px; line-height: 16px; padding-top: 4px; letter-spacing: .05px; font-size: 11.500px; }
.weather b { font-weight: 400; color: #1c1c1c; font-size: 11.500px; }
.taskbar text { font: 11.500px "Open Sans", sans-serif; fill: #fff; text-anchor: middle; }
.apps { display: flex; align-items: center; width: 610px; padding-bottom: 1px; }
.start { margin-left: 1px; }
.search { flex: none; display: flex; align-items: center; width: 219px; height: 32px; margin: 0 2px 0 13px; background: #f2f6fd; border: 1px solid #c6cfe2; border-radius: 16px; padding-left: 10px; font-size: 13px; color: #555; }
.search span { margin-left: 10px; letter-spacing: -.1px; }
.art { margin-left: auto; margin-right: 4px; }
.app { position: relative; width: 38px; height: 38px; margin-right: 6px; display: grid; place-items: center; flex: none; }
.search + .app { margin-left: 3px; }
.focus { background: #edf1fb; border-radius: 4px; }
.focus::after, .open::after { content: ""; position: absolute; left: 16px; bottom: 0; width: 6px; height: 3px; border-radius: 2px; background: #7d8190; }
.focus::after { left: 11px; width: 16px; background: #0d72ce; }
.tray { display: flex; align-items: center; margin-left: auto; padding: 0 19px 2px 0; }
.cloud { margin-left: 18px; }
.sync { margin-left: 15px; }
.wifi { margin-left: 16px; }
.vol { margin-left: 8px; }
.bat { margin-left: 8px; }
.clock { display: flex; flex-direction: column; align-items: flex-end; width: 79px; font-size: 11.500px; line-height: 16px; color: #1c1c1c; letter-spacing: .08px; white-space: nowrap; }

.watermark { position: absolute; left: 997px; top: 641px; white-space: nowrap; color: rgba(140, 140, 140, .6); }
.wm1 { font-size: 19.500px; line-height: 26px; letter-spacing: -.18px; }
.wm2 { font-size: 14px; line-height: 20px; letter-spacing: .1px; }
```
